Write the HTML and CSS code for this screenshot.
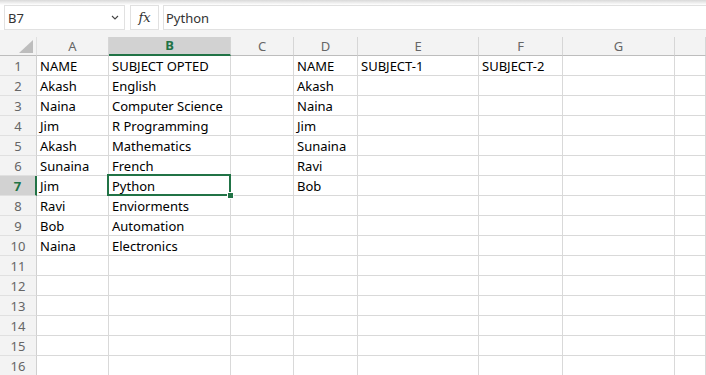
FILE: index.html
```html
<!DOCTYPE html>
<html lang="en">
<head>
    <meta charset="UTF-8">
    <title>Book1 - Excel</title>
    <link rel="stylesheet" href="styles.css">
</head>
<body>

<div class="formula-bar">
    <div class="name-box">
        <span>B7</span>
        <svg class="chevron" width="8" height="5" viewBox="0 0 8 5"><path d="M1 1 L4 4 L7 1" fill="none" stroke="#444" stroke-width="1.1"/></svg>
    </div>
    <div class="fx-box"><span>fx</span></div>
    <div class="formula-input">Python</div>
</div>

<div class="sheet">
    <div class="corner"><div class="triangle"></div></div>
    <div class="col-head">A</div>
    <div class="col-head active">B</div>
    <div class="col-head">C</div>
    <div class="col-head">D</div>
    <div class="col-head">E</div>
    <div class="col-head">F</div>
    <div class="col-head">G</div>
    <div class="col-head"></div>
</div>

<div class="sheet" id="rows"></div>

<script>
    const data = [
        ['NAME', 'SUBJECT OPTED', '', 'NAME', 'SUBJECT-1', 'SUBJECT-2', '', ''],
        ['Akash', 'English', '', 'Akash', '', '', '', ''],
        ['Naina', 'Computer Science', '', 'Naina', '', '', '', ''],
        ['Jim', 'R Programming', '', 'Jim', '', '', '', ''],
        ['Akash', 'Mathematics', '', 'Sunaina', '', '', '', ''],
        ['Sunaina', 'French', '', 'Ravi', '', '', '', ''],
        ['Jim', 'Python', '', 'Bob', '', '', '', ''],
        ['Ravi', 'Enviorments', '', '', '', '', '', ''],
        ['Bob', 'Automation', '', '', '', '', '', ''],
        ['Naina', 'Electronics', '', '', '', '', '', '']
    ];

    let html = '';
    for (let r = 1; r <= 16; r++) {
        const row = data[r - 1] || ['', '', '', '', '', '', '', ''];
        html += `<div class="row-head${r === 7 ? ' active' : ''}">${r}</div>`;
        row.forEach((val, c) => {
            const selected = (r === 7 && c === 1) ? ' selected' : '';
            html += `<div class="cell${selected}">${val}</div>`;
        });
    }
    document.getElementById('rows').innerHTML = html;
</script>

</body>
</html>
```

FILE: styles.css
```css
body {
    margin: 0;
    padding: 0;
    background-color: #f3f3f3;
    font-family: 'Noto Sans', 'Open Sans', sans-serif;
    font-size: 13px;
    color: #000;
    overflow: hidden;
    width: 706px;
    height: 375px;
}

.formula-bar {
    display: flex;
    align-items: stretch;
    height: 25px;
    padding: 5px 0 0 4px;
    margin-bottom: 7px;
    background: linear-gradient(#d9d9d9, #ffffff 5px, #ffffff);
}

.name-box {
    width: 121px;
    border: 1px solid #e1e1e1;
    background-color: #ffffff;
    display: flex;
    align-items: center;
    justify-content: space-between;
    padding: 0 4px 0 3px;
    box-sizing: border-box;
    color: #333;
}

.chevron {
    margin-right: 1px;
}

.fx-box {
    width: 29px;
    margin-left: 5px;
    border: 1px solid #e1e1e1;
    background-color: #ffffff;
    display: flex;
    align-items: center;
    justify-content: center;
    box-sizing: border-box;
}

.fx-box span {
    font-family: 'DejaVu Serif', 'Liberation Serif', serif;
    font-style: italic;
    font-size: 13px;
    color: #333;
}

.formula-input {
    flex: 1;
    margin-left: 4px;
    border: 1px solid #e1e1e1;
    border-right: none;
    background-color: #ffffff;
    display: flex;
    align-items: center;
    padding-left: 2px;
    color: #333;
    box-sizing: border-box;
}

.sheet {
    display: grid;
    grid-template-columns: 37px 72px 122px 63px 64px 121px 84px 112px 31px;
}

.corner {
    height: 18px;
    border-bottom: 1px solid #bdbdbd;
    border-right: 1px solid #e0e0e0;
    box-sizing: content-box;
    position: relative;
}

.triangle {
    position: absolute;
    right: 3px;
    bottom: 2px;
    width: 0;
    height: 0;
    border-left: 14px solid transparent;
    border-bottom: 13px solid #bdbdbd;
}

.col-head {
    height: 18px;
    line-height: 18px;
    text-align: center;
    color: #666;
    border-bottom: 1px solid #bdbdbd;
    border-right: 1px solid #d6d6d6;
    box-sizing: content-box;
}

.col-head.active {
    background-color: #d2d2d2;
    color: #217346;
    font-weight: bold;
    border-bottom: 2px solid #217346;
    height: 17px;
    line-height: 17px;
}

.row-head {
    height: 19px;
    line-height: 20px;
    text-align: center;
    color: #666;
    border-bottom: 1px solid #e0e0e0;
    border-right: 1px solid #d0d0d0;
}

.row-head.active {
    background-color: #d2d2d2;
    color: #217346;
    font-weight: bold;
    border-right: 2px solid #217346;
}

.cell {
    height: 19px;
    line-height: 20px;
    padding-left: 3px;
    background-color: #ffffff;
    border-bottom: 1px solid #d9d9d9;
    border-right: 1px solid #d9d9d9;
    white-space: nowrap;
    overflow: visible;
    position: relative;
}

.cell.selected::after {
    content: '';
    position: absolute;
    left: -2px;
    top: -2px;
    right: -1px;
    bottom: -1px;
    border: 2px solid #217346;
}

.cell.selected::before {
    content: '';
    position: absolute;
    right: -4px;
    bottom: -4px;
    width: 5px;
    height: 5px;
    background-color: #217346;
    border: 1px solid #ffffff;
    z-index: 2;
}
```
